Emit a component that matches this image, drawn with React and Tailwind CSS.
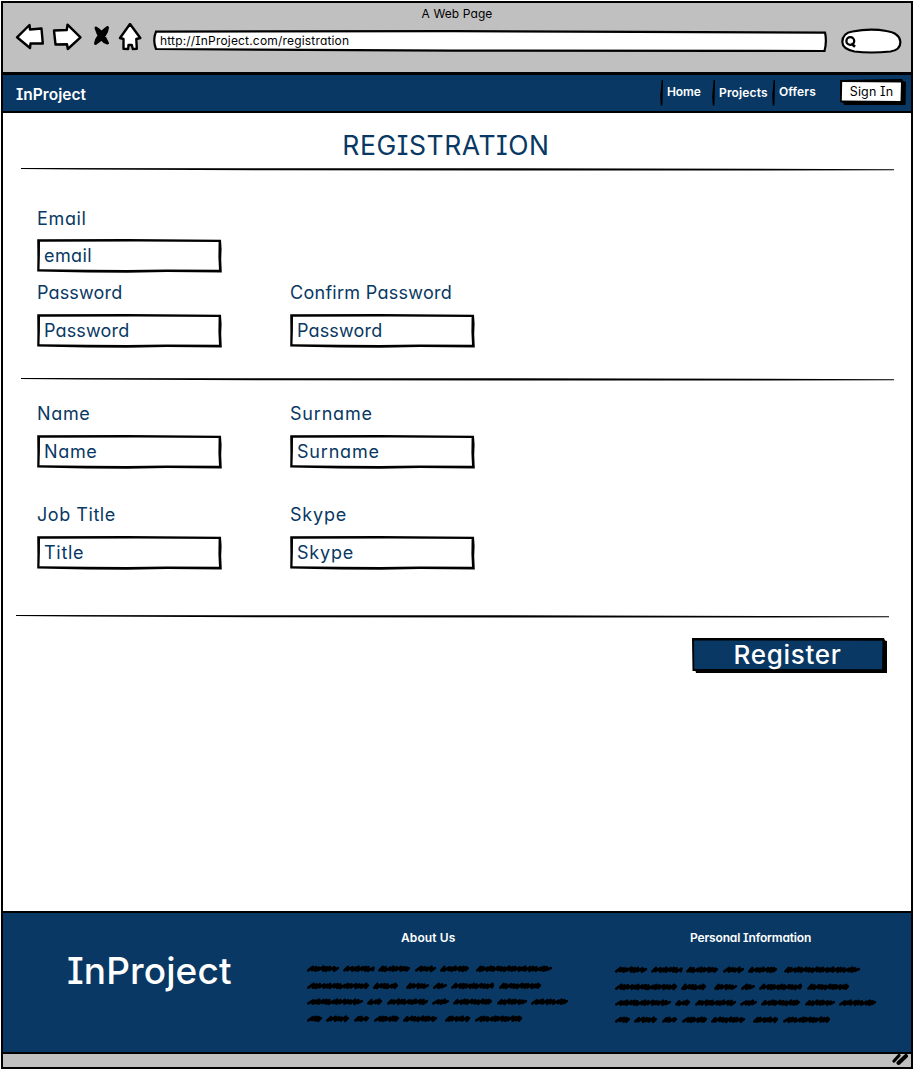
const WORDS = [
  [[0, 32], [36, 67], [71, 103], [108, 129], [133, 162], [169, 245]],
  [[0, 62], [66, 91], [99, 122], [126, 140], [144, 187], [192, 234]],
  [[0, 56], [60, 75], [80, 121], [125, 142], [146, 185], [190, 220], [224, 261]],
  [[0, 15], [19, 42], [47, 62], [67, 92], [96, 130], [138, 163], [168, 215]],
];
const ROW_Y = [6.8, 24, 39.8, 56.8];
const RISE = [4.6, 3.4, 3, 5.2, 3.2, 3.6, 5, 3.4, 3];
const TOP = [-1.9, -1.5, -1.2, -2.1, -1.6];
const DROP = [1.4, 1.9, 1.2, 1.7, 2, 1.3, 1.8];

function scribble(x0, x1, y, seed) {
  let x = x0 + 1.4;
  let d = `M${x} ${y + 1.6}`;
  let k = seed;
  while (x < x1 - 5.5) {
    const rise = RISE[k % 9];
    d += ` L${(x + rise).toFixed(1)} ${(y + TOP[k % 5]).toFixed(1)} L${(x + rise - 0.7).toFixed(1)} ${(y + DROP[k % 7]).toFixed(1)}`;
    x += rise - 0.3;
    k += 1;
  }
  return d + ` L${x1 - 1.2} ${y - 0.7}`;
}

function Scribbles() {
  return (
    <svg width="266" height="64" viewBox="0 0 266 64" fill="none" stroke="#000" strokeWidth="2.7" strokeLinecap="round" strokeLinejoin="round">
      {WORDS.map((row, r) => row.map(([a, b], i) => <path key={`${r}-${i}`} d={scribble(a, b, ROW_Y[r], r * 3 + i * 5)} />))}
    </svg>
  );
}

function Rule({ className }) {
  return (
    <svg className={className} width="873" height="4" viewBox="0 0 873 4">
      <path d="M0 0.1 L13 0 L220 0.2 L480 0.2 L873 1.2 L873 2.3 L640 2.6 L250 2.2 L60 1.4 L0 0.9Z" fill="#000" />
    </svg>
  );
}

function Tick() {
  return (
    <svg className="mt-[5px]" width="4" height="27" viewBox="0 0 4 27">
      <path d="M1.6 0 L3 0 L2.8 14 L2.4 25.5 L0.8 25.5 L0.2 16Z" />
    </svg>
  );
}

function Field({ label, value, labelSpacing, valueSpacing, gap = 'mt-[10px]' }) {
  return (
    <div className="w-[253px]">
      <div className={`h-[22px] text-[18px] leading-[22px] ${labelSpacing}`}>{label}</div>
      <div className={`relative flex h-[35px] w-[186px] items-center pb-[2px] pl-[7px] text-[18px] ${gap} ${valueSpacing}`}>
        <svg className="absolute inset-0" width="186" height="35" viewBox="0 0 186 35">
          <path
            fillRule="evenodd"
            d="M0.2 0.2 L90 0.1 L184 0.8 L184.6 10 L184.2 20 L184.8 33.6 L130 33 L90 33.7 L50 33.4 L0.2 32.4 L0.4 18Z M3 2.8 L2.9 16 L2.5 30.2 L50 30.8 L90 31 L130 30.4 L182 30.8 L181.4 18 L181.6 3 L100 2.6Z"
          />
        </svg>
        <span className="relative">{value}</span>
      </div>
    </div>
  );
}

export default function App() {
  return (
    <div className="h-[1071px] w-[914px] bg-white pl-px pt-px font-[Inter,sans-serif] [font-feature-settings:'cv08','cv11']">
      <div className="flex h-[1068px] w-[912px] flex-col border-2 border-black">
        <header className="h-[72px] border-b-[3px] border-black bg-[#c0c0c0]">
          <div className="flex h-[20px] justify-center text-[12px] leading-[21px] tracking-[0.1px]">A Web Page</div>
          <div className="flex h-[34px]">
            <svg className="ml-3" width="130" height="34" viewBox="15 23 130 34" fill="#fff" stroke="#000" strokeWidth="2.4" strokeLinejoin="round" strokeLinecap="round">
              <path d="M17 37.3 L29.5 25 L30 29.5 L41.5 28.5 L42.8 43.5 L30.5 43.5 L30 48 Z" />
              <path d="M54 30.5 L66.8 30 L67.5 24.7 L80.5 37.3 L67.8 49 L67 44.2 L55.5 44.5 Z" />
              <path d="M96 28 Q102 31 107.5 43 Q100 41 96 28Z M107.5 27.5 Q107 36 95.5 43.5 Q97 35 107.5 27.5Z" fill="#000" strokeWidth="3" />
              <path d="M130 24 L140.3 38 L136.3 39 L136.8 48.7 L132.8 49 L131.8 45 L128.5 45 L128.2 49 L123.5 48.8 L123.5 39 L120 38 Z" />
            </svg>
            <div className="relative ml-[8px] mt-[7px] flex h-[22px] w-[675px] items-center pb-[1px] pl-[7px] text-[12px] tracking-[0.18px]">
              <svg className="absolute inset-0" width="675" height="22" viewBox="0 0 675 22">
                <path d="M3 1.6 L300 1.2 L672 2.6 Q674 11 671.5 21 L300 20.6 L3 19 Q-0.5 10 3 1.6Z" fill="#fff" stroke="#000" strokeWidth="2.2" />
              </svg>
              <span className="relative">http://InProject.com/registration</span>
            </div>
            <svg className="ml-[13px] mt-[5px]" width="62" height="27" viewBox="0.5 0 62 27" fill="none" stroke="#000" strokeWidth="2.2">
              <path d="M12 3.5 Q30 0 46 3 Q59 5 59.8 13.5 Q60.5 22 50 23.5 Q30 25.5 14 23.5 Q2 21 1.8 14 Q2 5 12 3.5Z" fill="#fff" />
              <circle cx="9.8" cy="13" r="3.9" strokeWidth="2.3" />
              <path d="M10.8 15.5 L14.5 18.8" strokeWidth="2.6" />
            </svg>
          </div>
        </header>
        <nav className="flex h-[38px] items-start border-b-2 border-black bg-[#083863] text-white">
          <div className="ml-[13px] mt-[9px] text-[15.5px] font-semibold leading-[22px] tracking-[0.05px]">InProject</div>
          <div className="ml-auto flex h-full pr-[5px] text-[12px] font-semibold leading-[16px]">
            <div className="flex w-[52px]"><Tick /><span className="ml-[3px] mt-[9px] tracking-[-0.1px]">Home</span></div>
            <div className="flex w-[60px]"><Tick /><span className="ml-[3px] mt-[10px] tracking-[0.15px]">Projects</span></div>
            <div className="flex w-[68px]"><Tick /><span className="ml-[3px] mt-[9px] tracking-[0.1px]">Offers</span></div>
            <div className="relative mt-[4px] h-[27px] w-[66px] text-center text-[12.5px] font-normal text-black">
              <svg className="absolute inset-0" width="66" height="27" viewBox="0 0 66 27">
                <path d="M0 1 L62 0 L63 2 L66 3 L65.5 26 L4 26 L3.5 24 L0 23Z" />
                <path d="M2.2 3 L61 3.5 L60.5 22 L1.8 21.5Z" fill="#fff" />
              </svg>
              <div className="relative pr-[3px] pt-[5px] tracking-[0.15px]">Sign In</div>
            </div>
          </div>
        </nav>
        <main className="h-[798px] bg-white text-[#083863]">
          <h1 className="flex h-[55px] justify-center pr-[22px] pt-[16px] text-[26.5px] leading-[32px] tracking-[0.55px]">REGISTRATION</h1>
          <Rule className="ml-[18px]" />
          <div className="ml-[34px] mt-[36px]">
            <Field label="Email" value="email" labelSpacing="tracking-[0.65px]" valueSpacing="tracking-[0.4px]" gap="mt-[9px]" />
          </div>
          <div className="ml-[34px] mt-[8px] flex pb-px">
            <Field label="Password" value="Password" labelSpacing="tracking-[0.15px]" valueSpacing="tracking-[0.15px]" />
            <Field label="Confirm Password" value="Password" labelSpacing="tracking-[0.28px]" valueSpacing="tracking-[0.15px]" />
          </div>
          <Rule className="ml-[18px] mt-[28px]" />
          <div className="ml-[34px] mt-[21px] flex">
            <Field label="Name" value="Name" labelSpacing="tracking-[0.65px]" valueSpacing="tracking-[0.65px]" />
            <Field label="Surname" value="Surname" labelSpacing="tracking-[0.8px]" valueSpacing="tracking-[0.8px]" />
          </div>
          <div className="ml-[34px] mt-[34px] flex">
            <Field label="Job Title" value="Title" labelSpacing="tracking-[0.55px]" valueSpacing="tracking-[0.7px]" />
            <Field label="Skype" value="Skype" labelSpacing="tracking-[0.8px]" valueSpacing="tracking-[0.8px]" />
          </div>
          <Rule className="ml-[13px] mt-[44px]" />
          <div className="relative ml-[689px] mt-[19px] h-[36px] w-[196px] pr-[5px] text-center text-[26px] font-medium leading-[33px] tracking-[0.7px] text-white">
            <svg className="absolute inset-0" width="196" height="36" viewBox="0 0 196 36">
              <path d="M0 0 L192 0 L193 2.5 L195 3 L195 35 L4 35 L3.5 33 L0.5 33Z" />
              <path d="M2 2.5 L190.5 2.8 L190 31.2 L2.3 31Z" fill="#083863" />
            </svg>
            <span className="relative">Register</span>
          </div>
        </main>
        <footer className="flex h-[143px] border-y-2 border-black bg-[#083863] text-white">
          <div className="w-[304px] pl-[64px] pt-[36px] text-[37px] font-medium leading-[44px] tracking-[0.1px]">InProject</div>
          <div className="w-[308px]">
            <div className="h-[49px] pl-[94px] pt-[17px] text-[12px] font-semibold leading-[16px] tracking-[0.1px]">About Us</div>
            <Scribbles />
          </div>
          <div>
            <div className="h-[50px] pl-[75px] pt-[17px] text-[12px] font-semibold leading-[16px] tracking-[-0.15px]">Personal Information</div>
            <Scribbles />
          </div>
        </footer>
        <div className="flex flex-1 justify-end bg-[#c0c0c0]">
          <svg width="20" height="13" viewBox="0 0 20 13" stroke="#000" strokeLinecap="round">
            <path d="M3 7 L8 1.5" strokeWidth="3.2" />
            <path d="M7.5 9 L15 2" strokeWidth="4" />
          </svg>
        </div>
      </div>
    </div>
  );
}
